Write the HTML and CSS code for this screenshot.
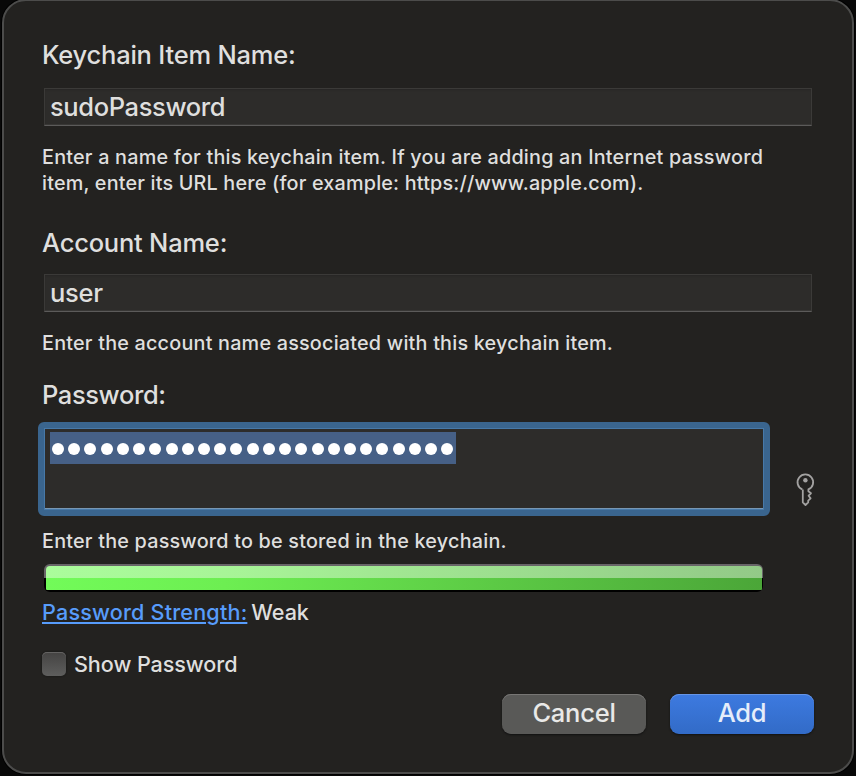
FILE: index.html
```html
<!DOCTYPE html>
<html lang="en">
<head>
<meta charset="utf-8">
<title>Keychain Item</title>
<link rel="stylesheet" href="styles.css">
</head>
<body>
<main class="dialog">
  <section class="group group-item">
    <h2 class="label">Keychain Item Name:</h2>
    <div class="field">sudoPassword</div>
    <p class="hint"><span>Enter a name for this keychain item. If you are adding an Internet password</span><br><span class="url-hint">item, enter its URL here (for example: https://www.apple.com).</span></p>
  </section>
  <section class="group group-account">
    <h2 class="label">Account Name:</h2>
    <div class="field user">user</div>
    <p class="hint">Enter the account name associated with this keychain item.</p>
  </section>
  <section class="group group-password">
    <h2 class="label password-label">Password:</h2>
    <div class="secret-row">
      <div class="secret">
        <div class="selection">
          <i></i><i></i><i></i><i></i><i></i><i></i><i></i><i></i><i></i><i></i><i></i><i></i><i></i><i></i><i></i><i></i><i></i><i></i><i></i><i></i><i></i><i></i><i></i><i></i><i></i>
        </div>
      </div>
      <svg class="key" width="20" height="34" viewBox="0 0 20 34" fill="none" stroke="#a3a2a1" stroke-width="1.8" stroke-linejoin="round">
        <path d="M7.3 16.4A7.8 7.8 0 1 1 13.4 16.4V18.2L16 20.3L13.6 22.7L15.6 25.4L13.2 27.6V29.4L10.5 32L7.8 29.4V16.6"/>
        <circle cx="10.4" cy="7.2" r="2.2" fill="#a3a2a1" stroke="none"/>
      </svg>
    </div>
    <p class="hint">Enter the password to be stored in the keychain.</p>
    <div class="meter"><div class="meter-fill"></div></div>
    <p class="strength"><a>Password Strength:</a><span class="rating">Weak</span></p>
  </section>
  <label class="check"><span class="box"></span><span class="check-text">Show Password</span></label>
  <footer class="actions">
    <button class="button">Cancel</button>
    <button class="button primary">Add</button>
  </footer>
</main>
</body>
</html>
```
FILE: styles.css
```css
* { box-sizing: border-box; }
html, body { margin: 0; height: 776px; overflow: hidden; background: #080808; }
body { font-family: Inter, "Liberation Sans", sans-serif; color: #dfdfde; }
h2, p { margin: 0; font-weight: 400; }
p, span, a { white-space: nowrap; }
.dialog {
  width: 852px; height: 775px; margin: -1px 0 0 2px; padding: 38px 38px 0;
  background: #232220; border: 2px solid #4c4c4b; border-radius: 24px;
  box-shadow: 0 0 0 1px #000;
}
.group { display: flex; flex-direction: column; }
.group-item { height: 188px; }
.group-account { height: 152px; }
.label { height: 32px; line-height: 32px; font-size: 25.5px; font-weight: 450; letter-spacing: -0.22px; }
.password-label { letter-spacing: -0.4px; }
.field {
  height: 38px; width: 768px; margin: 17px 0 0 2px; padding-left: 5px; line-height: 35px; font-size: 25.5px;
  font-weight: 450; letter-spacing: -0.38px;
  background: #2d2c2a; border: 1px solid #3b3a38; border-bottom: 1px solid #5c5b5a;
  box-shadow: inset 0 2px 2px -1px #282725, inset 0 -1px #383735;
}
.user { letter-spacing: -0.3px; }
.group-account .field { margin-top: 15px; }
.hint { margin-top: 18px; line-height: 26px; font-size: 19.8px; font-weight: 500; letter-spacing: 0.21px; }
.url-hint { letter-spacing: 0.18px; }
.secret-row { display: flex; align-items: flex-start; margin: 11px 0 0 -4px; height: 94px; }
.secret {
  flex: none; width: 732px; height: 94px; padding: 4px 6px; background: #2d2c2a;
  border: 6px solid #3a658e; border-radius: 6px;
  box-shadow: inset 0 0 0 1px #4779a8, inset 0 -1px 0 1px #7797b4;
}
.selection { display: flex; align-items: center; gap: 4.22px; width: 406px; height: 32px; padding: 1px 0 0 2px; background: #466086; }
.selection i { flex: none; width: 12px; height: 12px; border-radius: 50%; background: #fff; }
.key { flex: none; margin: 51px 0 0 25px; }
.group-password .hint { margin-top: 12px; }
.meter { width: 719px; height: 28px; margin: 10px 0 0 2px; padding: 2px 1px 2px 2px; border-radius: 6px; background: linear-gradient(#686568 0 50%, #000 50%); }
.meter-fill {
  height: 24px; border-radius: 4px 4px 1px 1px;
  background: linear-gradient(rgba(255,255,255,.4) 0 50%, transparent 50%), linear-gradient(92deg, #72fb59, #6dee52 25%, #4ba638);
}
.strength { display: flex; gap: 4px; height: 28px; margin-top: 6px; line-height: 28px; font-size: 21.6px; }
.strength a { color: #579cfb; font-weight: 450; letter-spacing: 0.18px; text-decoration: underline; text-decoration-thickness: 2px; text-underline-offset: 2px; }
.rating, .check-text { font-weight: 500; letter-spacing: -0.08px; }
.check { display: flex; align-items: center; gap: 8px; height: 28px; margin-top: 24px; font-size: 21.6px; line-height: 28px; }
.box { width: 24px; height: 24px; border-radius: 5px; background: linear-gradient(#444342, #5e5e5d); box-shadow: inset 0 1px #646362, 0 0 2px #111; }
.actions { display: flex; justify-content: flex-end; gap: 24px; margin-top: 16px; }
.button {
  width: 144px; height: 40px; padding: 0 0 2px; border: 0; border-radius: 9px; font: 450 25.5px/36px Inter, sans-serif; letter-spacing: -0.25px;
  color: #e9e9e8; background: #595957; box-shadow: inset 0 1px #777674, 0 1px 2px #111;
}
.primary { color: #e6edfa; background: linear-gradient(#3d7ae0, #326bc7); box-shadow: inset 0 1px #6695e6, 0 1px 2px #111; }
```
